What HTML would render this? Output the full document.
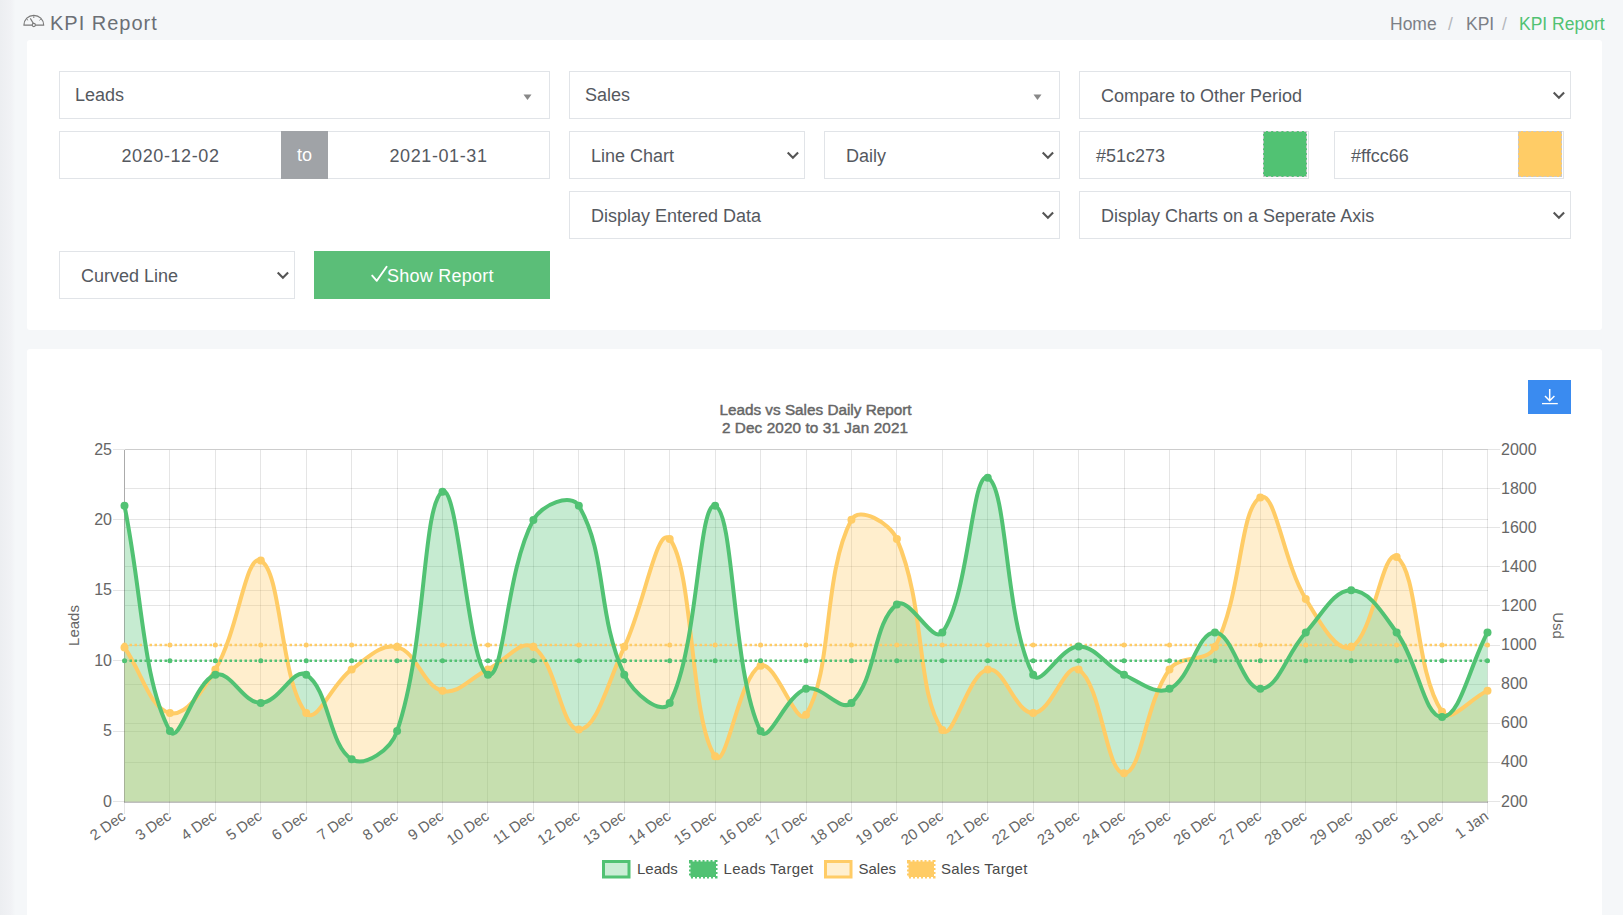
<!DOCTYPE html>
<html><head><meta charset="utf-8"><title>KPI Report</title>
<style>
html,body{margin:0;padding:0}
body{width:1623px;height:915px;overflow:hidden;position:relative;background:#f5f7f9;font-family:"Liberation Sans",sans-serif}
.side{position:absolute;left:0;top:0;width:28px;height:915px;background:linear-gradient(to right,#eceef1,#f1f2f5 40%,#f5f7f9 55%)}
.hdr{position:absolute;left:50px;top:9px;font-size:20px;letter-spacing:1px;color:#6b6f75;line-height:28px}
.bc{position:absolute;top:12px;font-size:17.5px;line-height:24px;color:#7c8087}
.panel{position:absolute;left:27px;width:1575px;background:#fff;border-radius:3px}
.box{position:absolute;box-sizing:border-box;border:1px solid #e1e4e8;background:#fff}
.box .t{position:absolute;top:0.4px;line-height:46px;font-size:18px;color:#55595f;white-space:nowrap}
.ctr{position:absolute;text-align:center;line-height:48px;font-size:18px;letter-spacing:0.6px;color:#55595f}
.to{position:absolute;background:#a0a3a7;color:#fff;text-align:center;line-height:49px;font-size:18px}
.sw{position:absolute;box-sizing:border-box;border:1px dashed #c8c8cc}
.btn{position:absolute;background:#5bbe78;color:#fff;text-align:center;line-height:48px;font-size:18px}
</style></head><body>
<div class="side"></div>
<svg width="24" height="16" viewBox="0 0 24 16" style="position:absolute;left:22px;top:11.5px"><path d="M1.9 13.2 A9.9 9.9 0 0 1 21.7 13.2 Z" fill="none" stroke="#7a7a7a" stroke-width="1.2" stroke-linejoin="round"/><path d="M11.8 4.2 V6 M4.8 7.2 L6.1 8.3 M18.8 7.2 L17.5 8.3" stroke="#7a7a7a" stroke-width="1"/><line x1="8.3" y1="6.4" x2="11.5" y2="11.6" stroke="#7a7a7a" stroke-width="1.1"/><circle cx="11.8" cy="13" r="1.6" fill="#f5f7f9" stroke="#7a7a7a" stroke-width="1.1"/></svg>
<div class="hdr">KPI Report</div>
<div class="bc" style="left:1390px">Home</div>
<div class="bc" style="left:1448px;color:#b5b8bd">/</div>
<div class="bc" style="left:1466px">KPI</div>
<div class="bc" style="left:1502px;color:#b5b8bd">/</div>
<div class="bc" style="left:1519px;color:#51c273">KPI Report</div>
<div class="panel" style="top:40px;height:290px"></div>
<div class="panel" style="top:349px;height:600px"></div>
<div class="box" style="left:59px;top:71px;width:491px;height:48px;"><span class="t" style="left:15px;top:0.4px">Leads</span><svg width="9" height="6" viewBox="0 0 9 6" style="position:absolute;right:17.5px;top:21.5px"><path d="M0.5 0.5 L8.5 0.5 L4.5 6 Z" fill="#888"/></svg></div>
<div class="box" style="left:569px;top:71px;width:491px;height:48px;"><span class="t" style="left:15px;top:0.4px">Sales</span><svg width="9" height="6" viewBox="0 0 9 6" style="position:absolute;right:17.5px;top:21.5px"><path d="M0.5 0.5 L8.5 0.5 L4.5 6 Z" fill="#888"/></svg></div>
<div class="box" style="left:1079px;top:71px;width:492px;height:48px;"><span class="t" style="left:21px;top:1.4px">Compare to Other Period</span><svg width="13" height="9" viewBox="0 0 13 9" style="position:absolute;right:5px;top:18.5px"><path d="M1.7 1.6 L6.9 6.8 L12.1 1.6" fill="none" stroke="#555" stroke-width="2.1"/></svg></div>
<div class="box" style="left:59px;top:131px;width:491px;height:48px;"></div>
<div class="ctr" style="left:60px;top:132px;width:221px;height:46px">2020-12-02</div>
<div class="ctr" style="left:328px;top:132px;width:221px;height:46px">2021-01-31</div>
<div class="to" style="left:281px;top:131px;width:47px;height:48px">to</div>
<div class="box" style="left:569px;top:131px;width:236px;height:48px;"><span class="t" style="left:21px;top:1.4px">Line Chart</span><svg width="13" height="9" viewBox="0 0 13 9" style="position:absolute;right:5px;top:18.5px"><path d="M1.7 1.6 L6.9 6.8 L12.1 1.6" fill="none" stroke="#555" stroke-width="2.1"/></svg></div>
<div class="box" style="left:824px;top:131px;width:236px;height:48px;"><span class="t" style="left:21px;top:1.4px">Daily</span><svg width="13" height="9" viewBox="0 0 13 9" style="position:absolute;right:5px;top:18.5px"><path d="M1.7 1.6 L6.9 6.8 L12.1 1.6" fill="none" stroke="#555" stroke-width="2.1"/></svg></div>
<div class="box" style="left:1079px;top:131px;width:230px;height:48px;"><span class="t" style="left:16px;top:1.4px">#51c273</span></div>
<div class="sw" style="left:1263px;top:131px;width:44px;height:46px;background:#51c273"></div>
<div class="box" style="left:1334px;top:131px;width:230px;height:48px;"><span class="t" style="left:16px;top:1.4px">#ffcc66</span></div>
<div class="sw" style="left:1518px;top:131px;width:44px;height:46px;background:#ffcc66"></div>
<div class="box" style="left:569px;top:191px;width:491px;height:48px;"><span class="t" style="left:21px;top:1.4px">Display Entered Data</span><svg width="13" height="9" viewBox="0 0 13 9" style="position:absolute;right:5px;top:18.5px"><path d="M1.7 1.6 L6.9 6.8 L12.1 1.6" fill="none" stroke="#555" stroke-width="2.1"/></svg></div>
<div class="box" style="left:1079px;top:191px;width:492px;height:48px;"><span class="t" style="left:21px;top:1.4px">Display Charts on a Seperate Axis</span><svg width="13" height="9" viewBox="0 0 13 9" style="position:absolute;right:5px;top:18.5px"><path d="M1.7 1.6 L6.9 6.8 L12.1 1.6" fill="none" stroke="#555" stroke-width="2.1"/></svg></div>
<div class="box" style="left:59px;top:251px;width:236px;height:48px;"><span class="t" style="left:21px;top:1.4px">Curved Line</span><svg width="13" height="9" viewBox="0 0 13 9" style="position:absolute;right:5px;top:18.5px"><path d="M1.7 1.6 L6.9 6.8 L12.1 1.6" fill="none" stroke="#555" stroke-width="2.1"/></svg></div>
<div class="btn" style="left:314px;top:251px;width:236px;height:48px"></div>
<svg width="18" height="18" viewBox="0 0 18 18" style="position:absolute;left:370px;top:265px"><path d="M2.2 10.6 L6.8 15.8 L16.6 1.8" fill="none" stroke="#fff" stroke-width="1.9" stroke-linecap="round" stroke-linejoin="round"/></svg>
<div style="position:absolute;left:387px;top:252px;line-height:48px;font-size:18px;letter-spacing:0.25px;color:#fff;white-space:nowrap">Show Report</div>
<div style="position:absolute;left:1528px;top:380px;width:43px;height:34px;background:#3a8bf0"><svg width="43" height="34" viewBox="0 0 43 34" style="position:absolute;left:0;top:0"><path d="M21.7 9 V20.5 M17 16 L21.7 20.7 L26.4 16" fill="none" stroke="#fff" stroke-width="1.5"/><line x1="14" y1="23.6" x2="29.8" y2="23.6" stroke="#fff" stroke-width="1.3"/></svg></div>
<div style="position:absolute;left:0;top:0;width:1623px;height:915px;pointer-events:none">
<svg width="1623" height="915" viewBox="0 0 1623 915" style="position:absolute;left:0;top:0">
<g stroke="rgba(0,0,0,0.1)" stroke-width="1" shape-rendering="crispEdges"><line x1="124.5" y1="449.5" x2="124.5" y2="813.5"/><line x1="169.5" y1="449.5" x2="169.5" y2="813.5"/><line x1="215.5" y1="449.5" x2="215.5" y2="813.5"/><line x1="260.5" y1="449.5" x2="260.5" y2="813.5"/><line x1="306.5" y1="449.5" x2="306.5" y2="813.5"/><line x1="351.5" y1="449.5" x2="351.5" y2="813.5"/><line x1="397.5" y1="449.5" x2="397.5" y2="813.5"/><line x1="442.5" y1="449.5" x2="442.5" y2="813.5"/><line x1="487.5" y1="449.5" x2="487.5" y2="813.5"/><line x1="533.5" y1="449.5" x2="533.5" y2="813.5"/><line x1="578.5" y1="449.5" x2="578.5" y2="813.5"/><line x1="624.5" y1="449.5" x2="624.5" y2="813.5"/><line x1="669.5" y1="449.5" x2="669.5" y2="813.5"/><line x1="715.5" y1="449.5" x2="715.5" y2="813.5"/><line x1="760.5" y1="449.5" x2="760.5" y2="813.5"/><line x1="806.5" y1="449.5" x2="806.5" y2="813.5"/><line x1="851.5" y1="449.5" x2="851.5" y2="813.5"/><line x1="896.5" y1="449.5" x2="896.5" y2="813.5"/><line x1="942.5" y1="449.5" x2="942.5" y2="813.5"/><line x1="987.5" y1="449.5" x2="987.5" y2="813.5"/><line x1="1033.5" y1="449.5" x2="1033.5" y2="813.5"/><line x1="1078.5" y1="449.5" x2="1078.5" y2="813.5"/><line x1="1124.5" y1="449.5" x2="1124.5" y2="813.5"/><line x1="1169.5" y1="449.5" x2="1169.5" y2="813.5"/><line x1="1214.5" y1="449.5" x2="1214.5" y2="813.5"/><line x1="1260.5" y1="449.5" x2="1260.5" y2="813.5"/><line x1="1305.5" y1="449.5" x2="1305.5" y2="813.5"/><line x1="1351.5" y1="449.5" x2="1351.5" y2="813.5"/><line x1="1396.5" y1="449.5" x2="1396.5" y2="813.5"/><line x1="1442.5" y1="449.5" x2="1442.5" y2="813.5"/><line x1="1487.5" y1="449.5" x2="1487.5" y2="813.5"/><line x1="112.5" y1="801.5" x2="124.5" y2="801.5"/><line x1="124.5" y1="801.5" x2="1487.5" y2="801.5"/><line x1="112.5" y1="731.5" x2="124.5" y2="731.5"/><line x1="124.5" y1="731.5" x2="1487.5" y2="731.5"/><line x1="112.5" y1="660.5" x2="124.5" y2="660.5"/><line x1="124.5" y1="660.5" x2="1487.5" y2="660.5"/><line x1="112.5" y1="590.5" x2="124.5" y2="590.5"/><line x1="124.5" y1="590.5" x2="1487.5" y2="590.5"/><line x1="112.5" y1="519.5" x2="124.5" y2="519.5"/><line x1="124.5" y1="519.5" x2="1487.5" y2="519.5"/><line x1="112.5" y1="449.5" x2="124.5" y2="449.5"/><line x1="124.5" y1="449.5" x2="1487.5" y2="449.5"/><line x1="124.5" y1="801.5" x2="1499.5" y2="801.5"/><line x1="124.5" y1="762.5" x2="1499.5" y2="762.5"/><line x1="124.5" y1="723.5" x2="1499.5" y2="723.5"/><line x1="124.5" y1="684.5" x2="1499.5" y2="684.5"/><line x1="124.5" y1="645.5" x2="1499.5" y2="645.5"/><line x1="124.5" y1="605.5" x2="1499.5" y2="605.5"/><line x1="124.5" y1="566.5" x2="1499.5" y2="566.5"/><line x1="124.5" y1="527.5" x2="1499.5" y2="527.5"/><line x1="124.5" y1="488.5" x2="1499.5" y2="488.5"/><line x1="124.5" y1="449.5" x2="1499.5" y2="449.5"/></g>
<g stroke="rgba(0,0,0,0.25)" stroke-width="1" shape-rendering="crispEdges"><line x1="124.5" y1="449.5" x2="124.5" y2="801.5"/><line x1="124" y1="802.0" x2="1487.5" y2="802.0"/></g>
<path d="M124.50,647.50 C142.67,673.74 149.63,708.21 169.93,713.10 C185.97,716.97 202.70,690.65 215.37,669.40 C239.05,629.65 245.33,553.16 260.80,560.60 C281.68,570.64 280.20,681.93 306.23,713.10 C316.55,725.45 331.51,684.04 351.67,669.40 C367.85,657.64 380.91,643.29 397.10,647.10 C417.26,651.85 422.30,685.84 442.53,690.80 C458.65,694.76 469.86,678.11 487.97,669.40 C506.21,660.63 520.70,638.68 533.40,647.10 C557.04,662.76 560.66,729.60 578.83,729.60 C597.01,729.60 608.07,681.06 624.27,647.10 C644.42,604.86 657.14,524.01 669.70,539.10 C693.49,567.69 690.18,721.54 715.13,756.30 C726.53,772.18 738.66,675.73 760.57,665.70 C775.01,659.09 796.91,729.31 806.00,714.70 C833.25,670.91 822.28,576.04 851.43,519.70 C858.63,505.80 889.56,522.18 896.87,539.10 C925.90,606.30 916.08,692.39 942.30,730.00 C952.42,744.51 967.90,673.09 987.73,669.40 C1004.24,666.33 1014.99,713.10 1033.17,713.10 C1051.34,713.10 1065.61,660.80 1078.60,669.40 C1101.96,684.88 1105.86,773.30 1124.03,773.30 C1142.21,773.30 1144.34,704.30 1169.47,669.40 C1180.68,653.82 1206.02,663.92 1214.90,647.10 C1242.36,595.12 1239.10,508.64 1260.33,497.40 C1275.44,489.40 1282.97,561.45 1305.77,599.00 C1319.32,621.33 1336.81,653.77 1351.20,647.10 C1373.16,636.93 1382.64,546.94 1396.63,556.90 C1418.99,572.82 1414.32,670.92 1442.07,711.80 C1450.67,724.48 1469.33,699.20 1487.50,690.80 L1487.50,801.50 L124.50,801.50 Z" fill="rgba(255,204,102,0.33)"/>
<path d="M124.50,505.82 C142.67,595.93 142.29,679.70 169.93,731.10 C178.64,747.28 194.46,681.26 215.37,674.78 C230.81,669.99 242.63,702.94 260.80,702.94 C278.97,702.94 293.23,666.72 306.23,674.78 C329.57,689.25 328.33,744.79 351.67,759.26 C364.67,767.32 390.56,750.35 397.10,731.10 C426.91,643.35 422.05,504.44 442.53,491.74 C458.39,481.91 468.38,668.71 487.97,674.78 C504.73,679.97 505.33,572.10 533.40,519.90 C541.67,504.52 571.06,492.58 578.83,505.82 C607.41,554.53 596.43,614.38 624.27,674.78 C632.77,693.23 662.10,717.07 669.70,702.94 C698.45,649.48 698.12,500.55 715.13,505.82 C734.46,511.81 731.95,673.45 760.57,731.10 C768.29,746.66 785.43,695.24 806.00,688.86 C821.77,683.97 840.36,713.24 851.43,702.94 C876.70,679.45 872.51,623.25 896.87,604.38 C908.86,595.09 933.26,645.15 942.30,632.54 C969.60,594.46 971.60,470.16 987.73,477.66 C1007.95,487.06 1004.42,621.32 1033.17,674.78 C1040.76,688.91 1060.43,646.62 1078.60,646.62 C1096.77,646.62 1104.80,665.84 1124.03,674.78 C1141.15,682.74 1155.05,695.56 1169.47,688.86 C1191.40,678.67 1196.73,632.54 1214.90,632.54 C1233.07,632.54 1242.16,688.86 1260.33,688.86 C1278.51,688.86 1286.20,653.77 1305.77,632.54 C1322.54,614.34 1333.03,590.30 1351.20,590.30 C1369.37,590.30 1382.36,612.63 1396.63,632.54 C1418.71,663.32 1423.89,717.02 1442.07,717.02 C1460.24,717.02 1469.33,666.33 1487.50,632.54 L1487.50,801.50 L124.50,801.50 Z" fill="rgba(81,194,115,0.33)"/>
<line x1="124.5" y1="645.06" x2="1487.5" y2="645.06" stroke="#ffcc66" stroke-width="2.5" stroke-dasharray="2.5 2.5"/>
<g fill="#ffcc66"><circle cx="124.50" cy="645.06" r="2.5"/><circle cx="169.93" cy="645.06" r="2.5"/><circle cx="215.37" cy="645.06" r="2.5"/><circle cx="260.80" cy="645.06" r="2.5"/><circle cx="306.23" cy="645.06" r="2.5"/><circle cx="351.67" cy="645.06" r="2.5"/><circle cx="397.10" cy="645.06" r="2.5"/><circle cx="442.53" cy="645.06" r="2.5"/><circle cx="487.97" cy="645.06" r="2.5"/><circle cx="533.40" cy="645.06" r="2.5"/><circle cx="578.83" cy="645.06" r="2.5"/><circle cx="624.27" cy="645.06" r="2.5"/><circle cx="669.70" cy="645.06" r="2.5"/><circle cx="715.13" cy="645.06" r="2.5"/><circle cx="760.57" cy="645.06" r="2.5"/><circle cx="806.00" cy="645.06" r="2.5"/><circle cx="851.43" cy="645.06" r="2.5"/><circle cx="896.87" cy="645.06" r="2.5"/><circle cx="942.30" cy="645.06" r="2.5"/><circle cx="987.73" cy="645.06" r="2.5"/><circle cx="1033.17" cy="645.06" r="2.5"/><circle cx="1078.60" cy="645.06" r="2.5"/><circle cx="1124.03" cy="645.06" r="2.5"/><circle cx="1169.47" cy="645.06" r="2.5"/><circle cx="1214.90" cy="645.06" r="2.5"/><circle cx="1260.33" cy="645.06" r="2.5"/><circle cx="1305.77" cy="645.06" r="2.5"/><circle cx="1351.20" cy="645.06" r="2.5"/><circle cx="1396.63" cy="645.06" r="2.5"/><circle cx="1442.07" cy="645.06" r="2.5"/><circle cx="1487.50" cy="645.06" r="2.5"/></g>
<path d="M124.50,647.50 C142.67,673.74 149.63,708.21 169.93,713.10 C185.97,716.97 202.70,690.65 215.37,669.40 C239.05,629.65 245.33,553.16 260.80,560.60 C281.68,570.64 280.20,681.93 306.23,713.10 C316.55,725.45 331.51,684.04 351.67,669.40 C367.85,657.64 380.91,643.29 397.10,647.10 C417.26,651.85 422.30,685.84 442.53,690.80 C458.65,694.76 469.86,678.11 487.97,669.40 C506.21,660.63 520.70,638.68 533.40,647.10 C557.04,662.76 560.66,729.60 578.83,729.60 C597.01,729.60 608.07,681.06 624.27,647.10 C644.42,604.86 657.14,524.01 669.70,539.10 C693.49,567.69 690.18,721.54 715.13,756.30 C726.53,772.18 738.66,675.73 760.57,665.70 C775.01,659.09 796.91,729.31 806.00,714.70 C833.25,670.91 822.28,576.04 851.43,519.70 C858.63,505.80 889.56,522.18 896.87,539.10 C925.90,606.30 916.08,692.39 942.30,730.00 C952.42,744.51 967.90,673.09 987.73,669.40 C1004.24,666.33 1014.99,713.10 1033.17,713.10 C1051.34,713.10 1065.61,660.80 1078.60,669.40 C1101.96,684.88 1105.86,773.30 1124.03,773.30 C1142.21,773.30 1144.34,704.30 1169.47,669.40 C1180.68,653.82 1206.02,663.92 1214.90,647.10 C1242.36,595.12 1239.10,508.64 1260.33,497.40 C1275.44,489.40 1282.97,561.45 1305.77,599.00 C1319.32,621.33 1336.81,653.77 1351.20,647.10 C1373.16,636.93 1382.64,546.94 1396.63,556.90 C1418.99,572.82 1414.32,670.92 1442.07,711.80 C1450.67,724.48 1469.33,699.20 1487.50,690.80" fill="none" stroke="#ffcc66" stroke-width="4"/>
<g fill="#ffcc66"><circle cx="124.50" cy="647.50" r="4"/><circle cx="169.93" cy="713.10" r="4"/><circle cx="215.37" cy="669.40" r="4"/><circle cx="260.80" cy="560.60" r="4"/><circle cx="306.23" cy="713.10" r="4"/><circle cx="351.67" cy="669.40" r="4"/><circle cx="397.10" cy="647.10" r="4"/><circle cx="442.53" cy="690.80" r="4"/><circle cx="487.97" cy="669.40" r="4"/><circle cx="533.40" cy="647.10" r="4"/><circle cx="578.83" cy="729.60" r="4"/><circle cx="624.27" cy="647.10" r="4"/><circle cx="669.70" cy="539.10" r="4"/><circle cx="715.13" cy="756.30" r="4"/><circle cx="760.57" cy="665.70" r="4"/><circle cx="806.00" cy="714.70" r="4"/><circle cx="851.43" cy="519.70" r="4"/><circle cx="896.87" cy="539.10" r="4"/><circle cx="942.30" cy="730.00" r="4"/><circle cx="987.73" cy="669.40" r="4"/><circle cx="1033.17" cy="713.10" r="4"/><circle cx="1078.60" cy="669.40" r="4"/><circle cx="1124.03" cy="773.30" r="4"/><circle cx="1169.47" cy="669.40" r="4"/><circle cx="1214.90" cy="647.10" r="4"/><circle cx="1260.33" cy="497.40" r="4"/><circle cx="1305.77" cy="599.00" r="4"/><circle cx="1351.20" cy="647.10" r="4"/><circle cx="1396.63" cy="556.90" r="4"/><circle cx="1442.07" cy="711.80" r="4"/><circle cx="1487.50" cy="690.80" r="4"/></g>
<line x1="124.5" y1="660.70" x2="1487.5" y2="660.70" stroke="#51c273" stroke-width="2.5" stroke-dasharray="2.5 2.5"/>
<g fill="#51c273"><circle cx="124.50" cy="660.70" r="2.5"/><circle cx="169.93" cy="660.70" r="2.5"/><circle cx="215.37" cy="660.70" r="2.5"/><circle cx="260.80" cy="660.70" r="2.5"/><circle cx="306.23" cy="660.70" r="2.5"/><circle cx="351.67" cy="660.70" r="2.5"/><circle cx="397.10" cy="660.70" r="2.5"/><circle cx="442.53" cy="660.70" r="2.5"/><circle cx="487.97" cy="660.70" r="2.5"/><circle cx="533.40" cy="660.70" r="2.5"/><circle cx="578.83" cy="660.70" r="2.5"/><circle cx="624.27" cy="660.70" r="2.5"/><circle cx="669.70" cy="660.70" r="2.5"/><circle cx="715.13" cy="660.70" r="2.5"/><circle cx="760.57" cy="660.70" r="2.5"/><circle cx="806.00" cy="660.70" r="2.5"/><circle cx="851.43" cy="660.70" r="2.5"/><circle cx="896.87" cy="660.70" r="2.5"/><circle cx="942.30" cy="660.70" r="2.5"/><circle cx="987.73" cy="660.70" r="2.5"/><circle cx="1033.17" cy="660.70" r="2.5"/><circle cx="1078.60" cy="660.70" r="2.5"/><circle cx="1124.03" cy="660.70" r="2.5"/><circle cx="1169.47" cy="660.70" r="2.5"/><circle cx="1214.90" cy="660.70" r="2.5"/><circle cx="1260.33" cy="660.70" r="2.5"/><circle cx="1305.77" cy="660.70" r="2.5"/><circle cx="1351.20" cy="660.70" r="2.5"/><circle cx="1396.63" cy="660.70" r="2.5"/><circle cx="1442.07" cy="660.70" r="2.5"/><circle cx="1487.50" cy="660.70" r="2.5"/></g>
<path d="M124.50,505.82 C142.67,595.93 142.29,679.70 169.93,731.10 C178.64,747.28 194.46,681.26 215.37,674.78 C230.81,669.99 242.63,702.94 260.80,702.94 C278.97,702.94 293.23,666.72 306.23,674.78 C329.57,689.25 328.33,744.79 351.67,759.26 C364.67,767.32 390.56,750.35 397.10,731.10 C426.91,643.35 422.05,504.44 442.53,491.74 C458.39,481.91 468.38,668.71 487.97,674.78 C504.73,679.97 505.33,572.10 533.40,519.90 C541.67,504.52 571.06,492.58 578.83,505.82 C607.41,554.53 596.43,614.38 624.27,674.78 C632.77,693.23 662.10,717.07 669.70,702.94 C698.45,649.48 698.12,500.55 715.13,505.82 C734.46,511.81 731.95,673.45 760.57,731.10 C768.29,746.66 785.43,695.24 806.00,688.86 C821.77,683.97 840.36,713.24 851.43,702.94 C876.70,679.45 872.51,623.25 896.87,604.38 C908.86,595.09 933.26,645.15 942.30,632.54 C969.60,594.46 971.60,470.16 987.73,477.66 C1007.95,487.06 1004.42,621.32 1033.17,674.78 C1040.76,688.91 1060.43,646.62 1078.60,646.62 C1096.77,646.62 1104.80,665.84 1124.03,674.78 C1141.15,682.74 1155.05,695.56 1169.47,688.86 C1191.40,678.67 1196.73,632.54 1214.90,632.54 C1233.07,632.54 1242.16,688.86 1260.33,688.86 C1278.51,688.86 1286.20,653.77 1305.77,632.54 C1322.54,614.34 1333.03,590.30 1351.20,590.30 C1369.37,590.30 1382.36,612.63 1396.63,632.54 C1418.71,663.32 1423.89,717.02 1442.07,717.02 C1460.24,717.02 1469.33,666.33 1487.50,632.54" fill="none" stroke="#51c273" stroke-width="4"/>
<g fill="#51c273"><circle cx="124.50" cy="505.82" r="4"/><circle cx="169.93" cy="731.10" r="4"/><circle cx="215.37" cy="674.78" r="4"/><circle cx="260.80" cy="702.94" r="4"/><circle cx="306.23" cy="674.78" r="4"/><circle cx="351.67" cy="759.26" r="4"/><circle cx="397.10" cy="731.10" r="4"/><circle cx="442.53" cy="491.74" r="4"/><circle cx="487.97" cy="674.78" r="4"/><circle cx="533.40" cy="519.90" r="4"/><circle cx="578.83" cy="505.82" r="4"/><circle cx="624.27" cy="674.78" r="4"/><circle cx="669.70" cy="702.94" r="4"/><circle cx="715.13" cy="505.82" r="4"/><circle cx="760.57" cy="731.10" r="4"/><circle cx="806.00" cy="688.86" r="4"/><circle cx="851.43" cy="702.94" r="4"/><circle cx="896.87" cy="604.38" r="4"/><circle cx="942.30" cy="632.54" r="4"/><circle cx="987.73" cy="477.66" r="4"/><circle cx="1033.17" cy="674.78" r="4"/><circle cx="1078.60" cy="646.62" r="4"/><circle cx="1124.03" cy="674.78" r="4"/><circle cx="1169.47" cy="688.86" r="4"/><circle cx="1214.90" cy="632.54" r="4"/><circle cx="1260.33" cy="688.86" r="4"/><circle cx="1305.77" cy="632.54" r="4"/><circle cx="1351.20" cy="590.30" r="4"/><circle cx="1396.63" cy="632.54" r="4"/><circle cx="1442.07" cy="717.02" r="4"/><circle cx="1487.50" cy="632.54" r="4"/></g>
<g font-family="Liberation Sans, sans-serif" font-size="15" fill="#666"><text x="112" y="801.0" font-size="16" text-anchor="end" dominant-baseline="central">0</text><text x="112" y="730.6" font-size="16" text-anchor="end" dominant-baseline="central">5</text><text x="112" y="660.2" font-size="16" text-anchor="end" dominant-baseline="central">10</text><text x="112" y="589.8" font-size="16" text-anchor="end" dominant-baseline="central">15</text><text x="112" y="519.4" font-size="16" text-anchor="end" dominant-baseline="central">20</text><text x="112" y="449.0" font-size="16" text-anchor="end" dominant-baseline="central">25</text><text x="1501" y="801.0" font-size="16" dominant-baseline="central">200</text><text x="1501" y="761.9" font-size="16" dominant-baseline="central">400</text><text x="1501" y="722.8" font-size="16" dominant-baseline="central">600</text><text x="1501" y="683.7" font-size="16" dominant-baseline="central">800</text><text x="1501" y="644.6" font-size="16" dominant-baseline="central">1000</text><text x="1501" y="605.4" font-size="16" dominant-baseline="central">1200</text><text x="1501" y="566.3" font-size="16" dominant-baseline="central">1400</text><text x="1501" y="527.2" font-size="16" dominant-baseline="central">1600</text><text x="1501" y="488.1" font-size="16" dominant-baseline="central">1800</text><text x="1501" y="449.0" font-size="16" dominant-baseline="central">2000</text><text transform="translate(123.50,814.0) rotate(-35)" text-anchor="end" dominant-baseline="central">2 Dec</text><text transform="translate(168.93,814.0) rotate(-35)" text-anchor="end" dominant-baseline="central">3 Dec</text><text transform="translate(214.37,814.0) rotate(-35)" text-anchor="end" dominant-baseline="central">4 Dec</text><text transform="translate(259.80,814.0) rotate(-35)" text-anchor="end" dominant-baseline="central">5 Dec</text><text transform="translate(305.23,814.0) rotate(-35)" text-anchor="end" dominant-baseline="central">6 Dec</text><text transform="translate(350.67,814.0) rotate(-35)" text-anchor="end" dominant-baseline="central">7 Dec</text><text transform="translate(396.10,814.0) rotate(-35)" text-anchor="end" dominant-baseline="central">8 Dec</text><text transform="translate(441.53,814.0) rotate(-35)" text-anchor="end" dominant-baseline="central">9 Dec</text><text transform="translate(486.97,814.0) rotate(-35)" text-anchor="end" dominant-baseline="central">10 Dec</text><text transform="translate(532.40,814.0) rotate(-35)" text-anchor="end" dominant-baseline="central">11 Dec</text><text transform="translate(577.83,814.0) rotate(-35)" text-anchor="end" dominant-baseline="central">12 Dec</text><text transform="translate(623.27,814.0) rotate(-35)" text-anchor="end" dominant-baseline="central">13 Dec</text><text transform="translate(668.70,814.0) rotate(-35)" text-anchor="end" dominant-baseline="central">14 Dec</text><text transform="translate(714.13,814.0) rotate(-35)" text-anchor="end" dominant-baseline="central">15 Dec</text><text transform="translate(759.57,814.0) rotate(-35)" text-anchor="end" dominant-baseline="central">16 Dec</text><text transform="translate(805.00,814.0) rotate(-35)" text-anchor="end" dominant-baseline="central">17 Dec</text><text transform="translate(850.43,814.0) rotate(-35)" text-anchor="end" dominant-baseline="central">18 Dec</text><text transform="translate(895.87,814.0) rotate(-35)" text-anchor="end" dominant-baseline="central">19 Dec</text><text transform="translate(941.30,814.0) rotate(-35)" text-anchor="end" dominant-baseline="central">20 Dec</text><text transform="translate(986.73,814.0) rotate(-35)" text-anchor="end" dominant-baseline="central">21 Dec</text><text transform="translate(1032.17,814.0) rotate(-35)" text-anchor="end" dominant-baseline="central">22 Dec</text><text transform="translate(1077.60,814.0) rotate(-35)" text-anchor="end" dominant-baseline="central">23 Dec</text><text transform="translate(1123.03,814.0) rotate(-35)" text-anchor="end" dominant-baseline="central">24 Dec</text><text transform="translate(1168.47,814.0) rotate(-35)" text-anchor="end" dominant-baseline="central">25 Dec</text><text transform="translate(1213.90,814.0) rotate(-35)" text-anchor="end" dominant-baseline="central">26 Dec</text><text transform="translate(1259.33,814.0) rotate(-35)" text-anchor="end" dominant-baseline="central">27 Dec</text><text transform="translate(1304.77,814.0) rotate(-35)" text-anchor="end" dominant-baseline="central">28 Dec</text><text transform="translate(1350.20,814.0) rotate(-35)" text-anchor="end" dominant-baseline="central">29 Dec</text><text transform="translate(1395.63,814.0) rotate(-35)" text-anchor="end" dominant-baseline="central">30 Dec</text><text transform="translate(1441.07,814.0) rotate(-35)" text-anchor="end" dominant-baseline="central">31 Dec</text><text transform="translate(1486.50,814.0) rotate(-35)" text-anchor="end" dominant-baseline="central">1 Jan</text><text transform="translate(73,625.5) rotate(-90)" text-anchor="middle" dominant-baseline="central">Leads</text><text transform="translate(1558,625.5) rotate(90)" text-anchor="middle" dominant-baseline="central">Usd</text></g>
<g font-family="Liberation Sans, sans-serif" font-size="15.3" fill="#666" stroke="#666" stroke-width="0.45" text-anchor="middle"><text x="815.5" y="415">Leads vs Sales Daily Report</text><text x="815" y="433" letter-spacing="0.1">2 Dec 2020 to 31 Jan 2021</text></g>
<rect x="603.5" y="861.5" width="25.5" height="15.5" fill="rgba(81,194,115,0.3)" stroke="#51c273" stroke-width="3"/><rect x="690.5" y="861.5" width="25.5" height="15.5" fill="#51c273" stroke="#51c273" stroke-width="3" stroke-dasharray="2 2"/><rect x="825.5" y="861.5" width="25.5" height="15.5" fill="rgba(255,204,102,0.3)" stroke="#ffcc66" stroke-width="3"/><rect x="908.5" y="861.5" width="25.5" height="15.5" fill="#ffcc66" stroke="#ffcc66" stroke-width="3" stroke-dasharray="2 2"/>
<g font-family="Liberation Sans, sans-serif" font-size="15" fill="#4a4a4a"><text x="637" y="874">Leads</text><text x="723.5" y="874" letter-spacing="0.3">Leads Target</text><text x="858.5" y="874">Sales</text><text x="941" y="874" letter-spacing="0.3">Sales Target</text></g>
</svg>
</div>
</body></html>
